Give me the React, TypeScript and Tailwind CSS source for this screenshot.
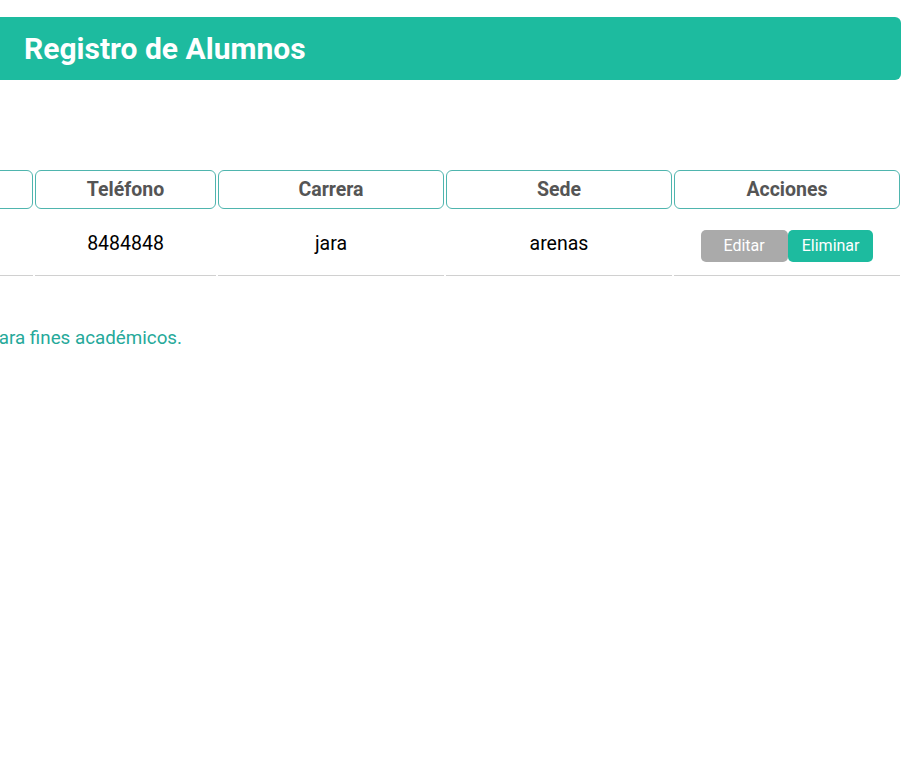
import React from "react";

type Alumno = {
  rut: string;
  nombre: string;
  apellido: string;
  correo: string;
  telefono: string;
  carrera: string;
  sede: string;
};

const alumnos: Alumno[] = [
  {
    rut: "11111111-1",
    nombre: "juan",
    apellido: "perez",
    correo: "juan@correo.cl",
    telefono: "8484848",
    carrera: "jara",
    sede: "arenas",
  },
];

const columns = ["RUT", "Nombre", "Apellido", "Correo", "Teléfono", "Carrera", "Sede", "Acciones"];
const widths = ["w-[226px]", "w-[226px]", "w-[226px]", "w-[226px]", "w-[181px]", "w-[226px]", "w-[226px]", "w-[226px]"];

export default function App() {
  return (
    <div className="min-h-screen overflow-hidden bg-white font-['Roboto','Liberation_Sans',sans-serif]">
      {/* header */}
      <header className="mr-5 mt-[17px] flex h-[63px] items-center rounded-r-md bg-[#1dbb9f] pl-6">
        <h1 className="text-[30px] font-bold text-white">Registro de Alumnos</h1>
      </header>

      {/* table overflows to the left */}
      <div className="mt-[88px] flex justify-end pr-[19px]">
        <table className="shrink-0 table-fixed border-separate border-spacing-[2px]">
          <colgroup>
            {widths.map((w, i) => (
              <col key={i} className={w} />
            ))}
          </colgroup>
          <thead>
            <tr>
              {columns.map((c) => (
                <th
                  key={c}
                  className="h-[39px] rounded-md border border-[#4fb5ae] text-center text-[19.5px] font-bold text-[#555]"
                >
                  {c}
                </th>
              ))}
            </tr>
          </thead>
          <tbody>
            {alumnos.map((a) => (
              <tr key={a.rut}>
                {[a.rut, a.nombre, a.apellido, a.correo, a.telefono, a.carrera, a.sede].map((v, i) => (
                  <td
                    key={i}
                    className="h-[65px] border-b border-[#d0d0d0] pt-[2px] text-center text-[19.5px] text-black"
                  >
                    {v}
                  </td>
                ))}
                <td className="h-[65px] border-b border-[#d0d0d0] pt-[6px] text-center">
                  <div className="flex justify-center">
                    <button className="h-8 rounded-[5px] bg-[#aaaaaa] px-[23px] text-[16px] text-white">
                      Editar
                    </button>
                    <button className="h-8 rounded-[5px] bg-[#1dbb9f] px-[14px] text-[16px] text-white">
                      Eliminar
                    </button>
                  </div>
                </td>
              </tr>
            ))}
          </tbody>
        </table>
      </div>

      {/* footer */}
      <div className="mt-[46px] flex justify-end">
        <p className="mr-[739px] shrink-0 whitespace-nowrap text-[18.8px] text-[#26a99a]">
          Sistema desarrollado exclusivamente para fines académicos.
        </p>
      </div>
    </div>
  );
}
